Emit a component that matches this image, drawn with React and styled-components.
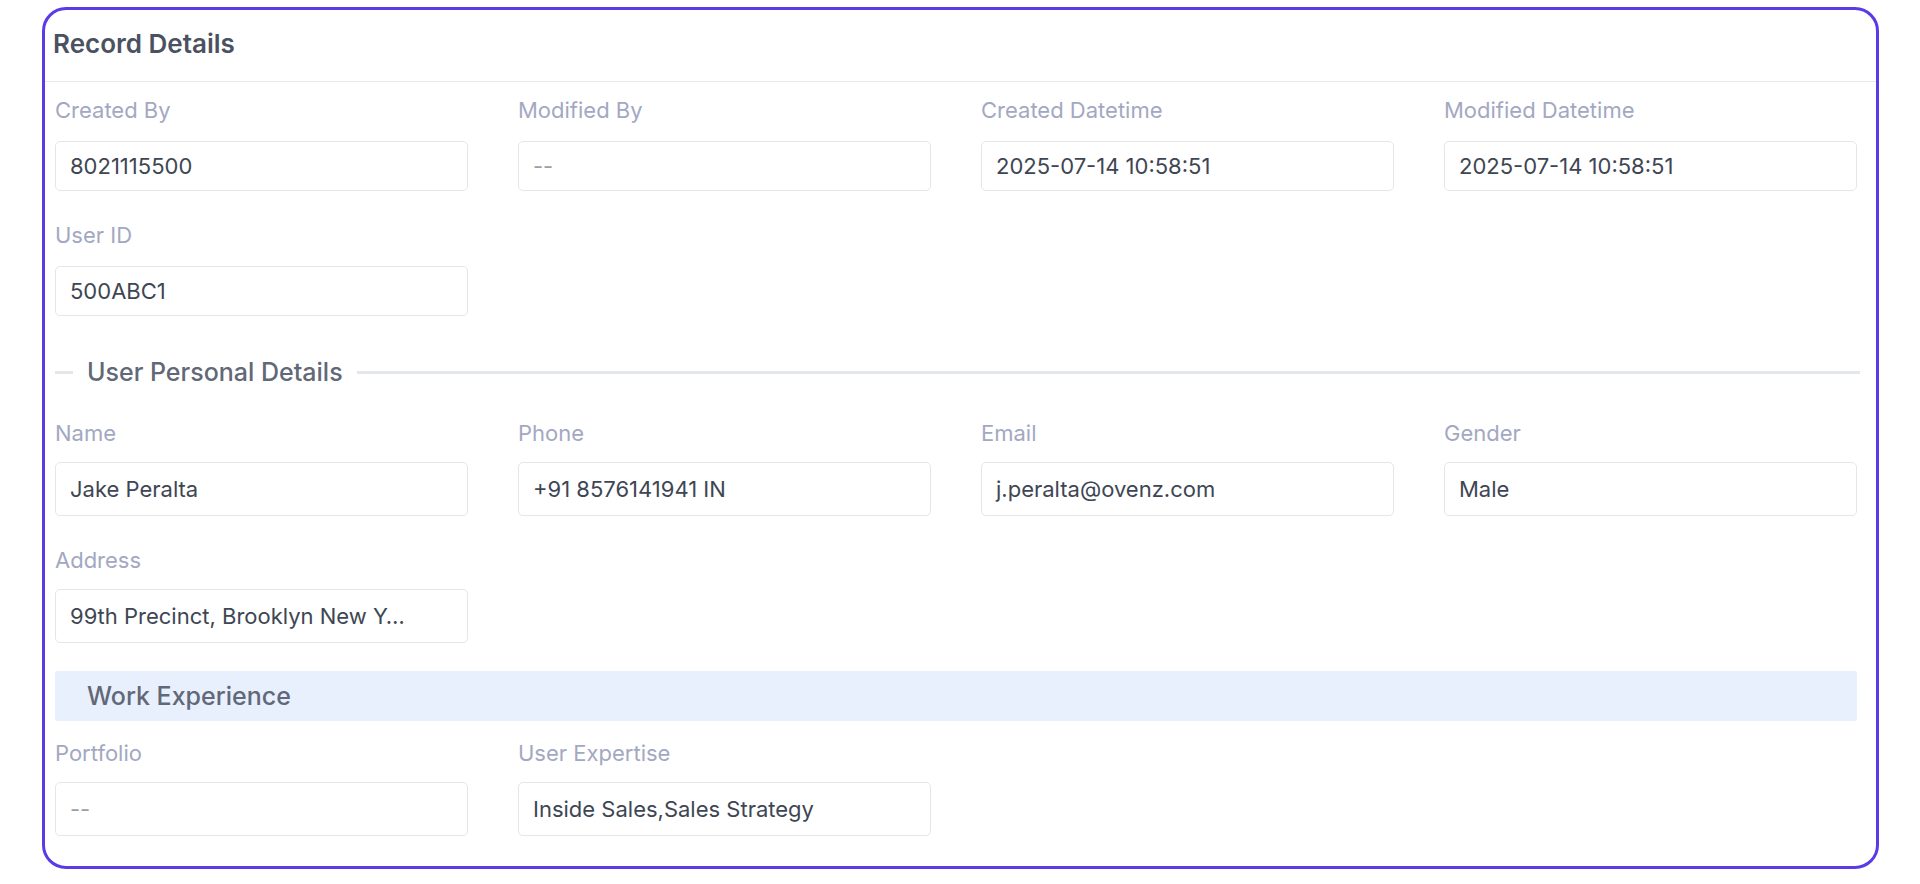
import React from "react";
import styled, { createGlobalStyle } from "styled-components";

const GlobalStyle = createGlobalStyle`
  * { box-sizing: border-box; }
  body {
    margin: 0;
    background: #fff;
    font-family: Inter, "Noto Sans", sans-serif;
  }
`;

const Page = styled.div`
  padding: 7px 41px 0 42px;
`;

const Card = styled.section`
  border: 3px solid #5b3ae8;
  border-radius: 24px;
  background: #fff;
  overflow: hidden;
`;

const Header = styled.div`
  display: flex;
  align-items: center;
  height: 72px;
  padding: 0 8px 4px;
  border-bottom: 1px solid #e9eaed;
`;

const Title = styled.h2`
  margin: 0;
  font-size: 26px;
  font-weight: 600;
  color: #4a5262;
`;

const Body = styled.div`
  padding: 15px 19px 30px 10px;
`;

const Grid = styled.div`
  display: grid;
  grid-template-columns: repeat(4, 1fr);
  column-gap: 50px;
  row-gap: 31px;
`;

const Field = styled.div`
  display: flex;
  flex-direction: column;
  gap: ${(p) => (p.$tall ? "16px" : "18px")};
`;

const Label = styled.span`
  font-size: 22px;
  line-height: 26px;
  color: #a3a8c2;
`;

const Value = styled.div`
  display: flex;
  align-items: center;
  height: ${(p) => (p.$tall ? "54px" : "50px")};
  padding: 0 14px;
  border: 1px solid #e4e6ea;
  border-radius: 5px;
  font-size: 22px;
  color: ${(p) => (p.$empty ? "#9aa0ab" : "#3e4653")};
  white-space: nowrap;
  overflow: hidden;
`;

const Legend = styled.div`
  display: flex;
  align-items: center;
  margin: 42px -3px 33px 0;

  &::before,
  &::after {
    content: "";
    height: 3px;
    background: #e3e6eb;
  }
  &::before {
    width: 18px;
  }
  &::after {
    flex: 1;
  }
`;

const LegendText = styled.span`
  padding: 0 14px 0 14px;
  font-size: 25px;
  line-height: 29px;
  font-weight: 500;
  color: #616877;
`;

const Band = styled.div`
  display: flex;
  align-items: center;
  height: 50px;
  margin: 28px 0 19px;
  padding: 0 32px;
  background: #e9f0fd;
  border-radius: 2px;
  font-size: 25px;
  font-weight: 500;
  color: #616877;
`;

const Item = ({ label, value, tall }) => (
  <Field $tall={tall}>
    <Label>{label}</Label>
    <Value $tall={tall} $empty={value === "--"}>
      {value}
    </Value>
  </Field>
);

const record = [
  ["Created By", "8021115500"],
  ["Modified By", "--"],
  ["Created Datetime", "2025-07-14 10:58:51"],
  ["Modified Datetime", "2025-07-14 10:58:51"],
  ["User ID", "500ABC1"],
];

const personal = [
  ["Name", "Jake Peralta"],
  ["Phone", "+91 8576141941 IN"],
  ["Email", "j.peralta@ovenz.com"],
  ["Gender", "Male"],
  ["Address", "99th Precinct, Brooklyn New Y…"],
];

const work = [
  ["Portfolio", "--"],
  ["User Expertise", "Inside Sales,Sales Strategy"],
];

export default function App() {
  return (
    <Page>
      <GlobalStyle />
      <Card>
        <Header>
          <Title>Record Details</Title>
        </Header>
        <Body>
          <Grid>
            {record.map(([l, v]) => (
              <Item key={l} label={l} value={v} />
            ))}
          </Grid>

          <Legend>
            <LegendText>User Personal Details</LegendText>
          </Legend>

          <Grid>
            {personal.map(([l, v]) => (
              <Item key={l} label={l} value={v} tall />
            ))}
          </Grid>

          <Band>Work Experience</Band>

          <Grid>
            {work.map(([l, v]) => (
              <Item key={l} label={l} value={v} tall />
            ))}
          </Grid>
        </Body>
      </Card>
    </Page>
  );
}
